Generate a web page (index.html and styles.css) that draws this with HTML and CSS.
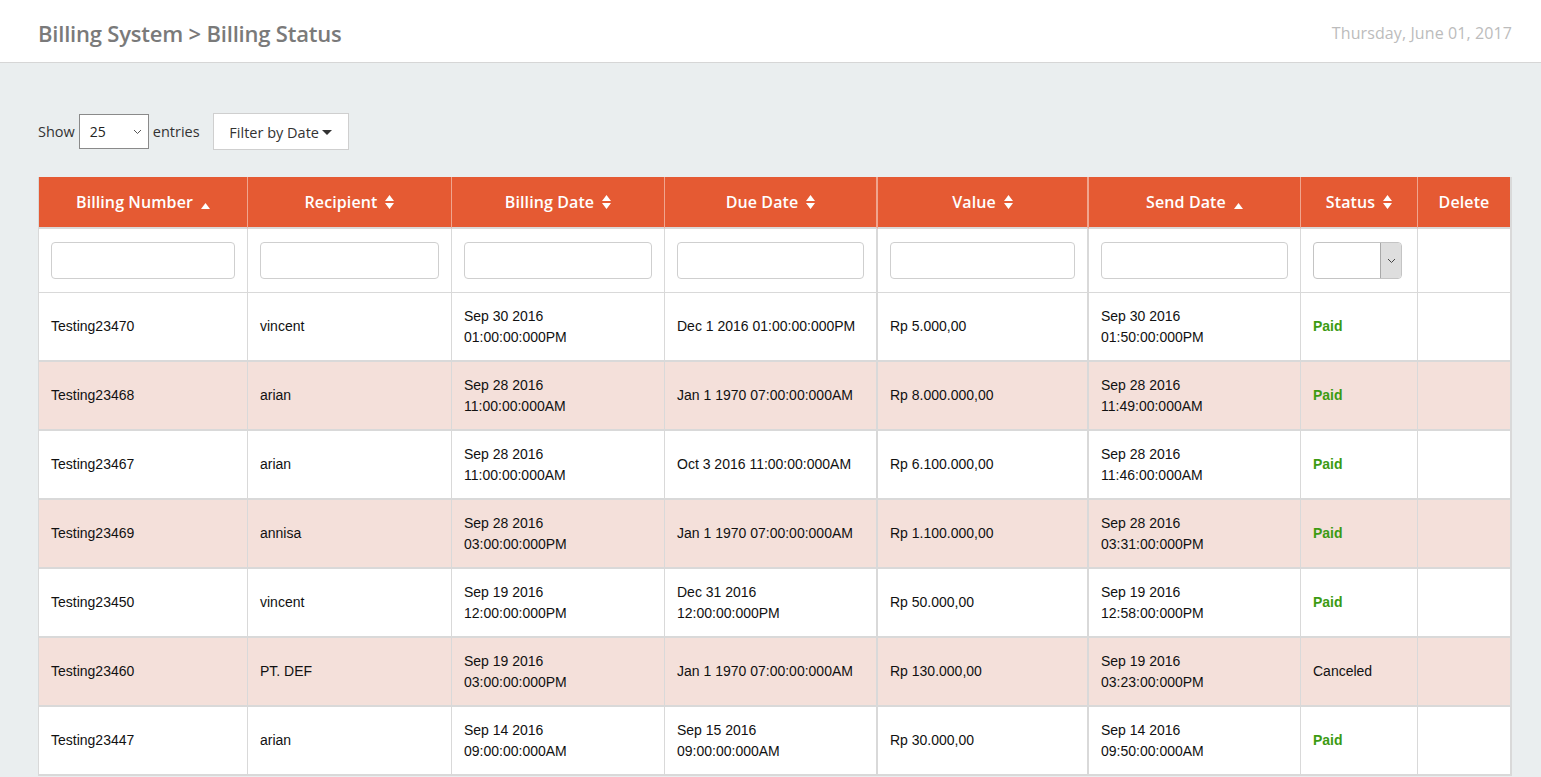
FILE: index.html
```html
<!DOCTYPE html>
<html>
<head>
<meta charset="utf-8">
<link rel="stylesheet" href="styles.css">
</head>
<body>
<header class="topbar">
  <h1 class="crumb">Billing System &gt; Billing Status</h1>
  <div class="today">Thursday, June 01, 2017</div>
</header>
<main class="content">
  <div class="controls">
    <span class="lbl">Show</span>
    <div class="len-select"><span>25</span><svg width="9" height="6" viewBox="0 0 9 6"><path d="M1 1l3.5 3.5L8 1" fill="none" stroke="#555" stroke-width="1"/></svg></div>
    <span class="lbl">entries</span>
    <button class="filter-btn">Filter by Date<svg width="10" height="6" viewBox="0 0 10 6"><path d="M0 0h10L5 5z" fill="#333"/></svg></button>
  </div>
  <table class="grid">
    <colgroup>
      <col class="c1"><col class="c2"><col class="c3"><col class="c4"><col class="c5"><col class="c6"><col class="c7"><col class="c8">
    </colgroup>
    <thead>
      <tr class="head">
        <th>Billing Number<svg class="sort" width="9" height="6" viewBox="0 0 9 6"><path d="M0 6L4.5 0L9 6z"/></svg></th>
        <th>Recipient<svg class="sort" width="9" height="14" viewBox="0 0 9 14"><path d="M0 6L4.5 0L9 6zM0 8L4.5 14L9 8z"/></svg></th>
        <th>Billing Date<svg class="sort" width="9" height="14" viewBox="0 0 9 14"><path d="M0 6L4.5 0L9 6zM0 8L4.5 14L9 8z"/></svg></th>
        <th class="thick">Due Date<svg class="sort" width="9" height="14" viewBox="0 0 9 14"><path d="M0 6L4.5 0L9 6zM0 8L4.5 14L9 8z"/></svg></th>
        <th class="thick">Value<svg class="sort" width="9" height="14" viewBox="0 0 9 14"><path d="M0 6L4.5 0L9 6zM0 8L4.5 14L9 8z"/></svg></th>
        <th>Send Date<svg class="sort" width="9" height="6" viewBox="0 0 9 6"><path d="M0 6L4.5 0L9 6z"/></svg></th>
        <th>Status<svg class="sort" width="9" height="14" viewBox="0 0 9 14"><path d="M0 6L4.5 0L9 6zM0 8L4.5 14L9 8z"/></svg></th>
        <th class="last">Delete</th>
      </tr>
      <tr class="filters">
        <td><div class="inp"></div></td>
        <td><div class="inp"></div></td>
        <td><div class="inp"></div></td>
        <td class="thick"><div class="inp"></div></td>
        <td class="thick"><div class="inp"></div></td>
        <td><div class="inp"></div></td>
        <td><div class="status-sel"><span class="fill"></span><span class="arrow"><svg width="9" height="6" viewBox="0 0 9 6"><path d="M1 1l3.5 3.5L8 1" fill="none" stroke="#444" stroke-width="1"/></svg></span></div></td>
        <td class="last"></td>
      </tr>
    </thead>
    <tbody>
      <tr>
        <td>Testing23470</td><td>vincent</td><td>Sep 30 2016<br>01:00:00:000PM</td><td class="thick">Dec 1 2016 01:00:00:000PM</td><td class="thick">Rp 5.000,00</td><td>Sep 30 2016<br>01:50:00:000PM</td><td class="paid">Paid</td><td class="last"></td>
      </tr>
      <tr class="alt">
        <td>Testing23468</td><td>arian</td><td>Sep 28 2016<br>11:00:00:000AM</td><td class="thick">Jan 1 1970 07:00:00:000AM</td><td class="thick">Rp 8.000.000,00</td><td>Sep 28 2016<br>11:49:00:000AM</td><td class="paid">Paid</td><td class="last"></td>
      </tr>
      <tr>
        <td>Testing23467</td><td>arian</td><td>Sep 28 2016<br>11:00:00:000AM</td><td class="thick">Oct 3 2016 11:00:00:000AM</td><td class="thick">Rp 6.100.000,00</td><td>Sep 28 2016<br>11:46:00:000AM</td><td class="paid">Paid</td><td class="last"></td>
      </tr>
      <tr class="alt">
        <td>Testing23469</td><td>annisa</td><td>Sep 28 2016<br>03:00:00:000PM</td><td class="thick">Jan 1 1970 07:00:00:000AM</td><td class="thick">Rp 1.100.000,00</td><td>Sep 28 2016<br>03:31:00:000PM</td><td class="paid">Paid</td><td class="last"></td>
      </tr>
      <tr>
        <td>Testing23450</td><td>vincent</td><td>Sep 19 2016<br>12:00:00:000PM</td><td class="thick">Dec 31 2016<br>12:00:00:000PM</td><td class="thick">Rp 50.000,00</td><td>Sep 19 2016<br>12:58:00:000PM</td><td class="paid">Paid</td><td class="last"></td>
      </tr>
      <tr class="alt">
        <td>Testing23460</td><td>PT. DEF</td><td>Sep 19 2016<br>03:00:00:000PM</td><td class="thick">Jan 1 1970 07:00:00:000AM</td><td class="thick">Rp 130.000,00</td><td>Sep 19 2016<br>03:23:00:000PM</td><td>Canceled</td><td class="last"></td>
      </tr>
      <tr>
        <td>Testing23447</td><td>arian</td><td>Sep 14 2016<br>09:00:00:000AM</td><td class="thick">Sep 15 2016<br>09:00:00:000AM</td><td class="thick">Rp 30.000,00</td><td>Sep 14 2016<br>09:50:00:000AM</td><td class="paid">Paid</td><td class="last"></td>
      </tr>
    </tbody>
  </table>
</main>
</body>
</html>
```

FILE: styles.css
```css
* { box-sizing: border-box; }
html, body { margin: 0; padding: 0; }
body {
  background: #eaeeef;
  font-family: "Open Sans", "Liberation Sans", sans-serif;
  overflow: hidden;
}
.topbar {
  background: #fff;
  height: 63px;
  border-bottom: 1px solid #d6d6d6;
  display: flex;
  align-items: center;
  justify-content: space-between;
  padding: 0 29px 0 38px;
}
.crumb {
  margin: 0;
  font-size: 22px;
  font-weight: 600;
  color: #7a7a7a;
  letter-spacing: -0.2px;
  padding-top: 4px;
}
.today {
  font-size: 16px;
  color: #bcbcbc;
  padding-top: 3px;
  letter-spacing: 0.1px;
}
.content {
  padding: 50px 30px 0 38px;
}
.controls {
  display: flex;
  align-items: center;
  height: 37px;
  margin-bottom: 27px;
  font-size: 14px;
  color: #333;
}
.lbl { font-weight: 400; font-size: 14.5px; }
.len-select {
  width: 70px;
  height: 35px;
  margin: 0 4px 0 4px;
  border: 1px solid #8a8a8a;
  background: #fff;
  display: flex;
  align-items: center;
  justify-content: space-between;
  padding: 0 6px 0 10px;
  font-size: 14px;
  color: #222;
}
.filter-btn {
  margin-left: 13px;
  height: 37px;
  width: 136px;
  border: 1px solid #cfcfcf;
  background: #fff;
  font-family: "Open Sans", "Liberation Sans", sans-serif;
  font-size: 14.5px;
  font-weight: 400;
  color: #333;
  display: flex;
  align-items: center;
  justify-content: center;
  gap: 3px;
  padding: 2px 0 0 0;
}
.grid {
  width: 1473px;
  table-layout: fixed;
  border-collapse: separate;
  border-spacing: 0;
  border-left: 1px solid #d9d9d9;
  font-family: "Liberation Sans", Arial, sans-serif;
  font-size: 14px;
  color: #111;
}
.c1 { width: 209px; }
.c2 { width: 204px; }
.c3 { width: 213px; }
.c4 { width: 213px; }
.c5 { width: 211px; }
.c6 { width: 212px; }
.c7 { width: 117px; }
.c8 { width: 94px; }
.head th {
  background: #e55a33;
  color: #fff;
  font-family: "Open Sans", "Liberation Sans", sans-serif;
  font-size: 16px;
  font-weight: 600;
  letter-spacing: 0.1px;
  height: 52px;
  border-right: 1px solid #f0a58e;
  border-bottom: 2px solid #d9d9d9;
  text-align: center;
  vertical-align: middle;
  padding: 0;
  white-space: nowrap;
}
.head th.thick { border-right: 2px solid #f0a58e; }
.head th.last { border-right: 2px solid #d9d9d9; }
.sort { fill: #fff; margin-left: 8px; vertical-align: -1px; }
td {
  background: #fff;
  border-right: 1px solid #d9d9d9;
  border-bottom: 2px solid #d9d9d9;
  padding: 0 12px 0 12px;
  height: 69px;
  line-height: 21px;
  vertical-align: middle;
}
td.thick { border-right: 2px solid #d9d9d9; }
td.last { border-right: 2px solid #d9d9d9; }
tr.alt td { background: #f4e0da; }
.filters td {
  height: 64px;
  border-bottom: 1px solid #d9d9d9;
}
.inp {
  height: 37px;
  border: 1px solid #cfcfcf;
  border-radius: 4px;
  background: #fff;
}
.status-sel {
  height: 37px;
  width: 89px;
  border: 1px solid #c4c4c4;
  border-radius: 4px;
  display: flex;
  overflow: hidden;
  background: #fff;
}
.status-sel .fill { flex: 1; }
.status-sel .arrow {
  width: 21px;
  background: #dedede;
  border-left: 1px solid #a9a9a9;
  display: flex;
  align-items: center;
  justify-content: center;
}
td.paid {
  color: #3c9b12;
  font-weight: bold;
}
```
